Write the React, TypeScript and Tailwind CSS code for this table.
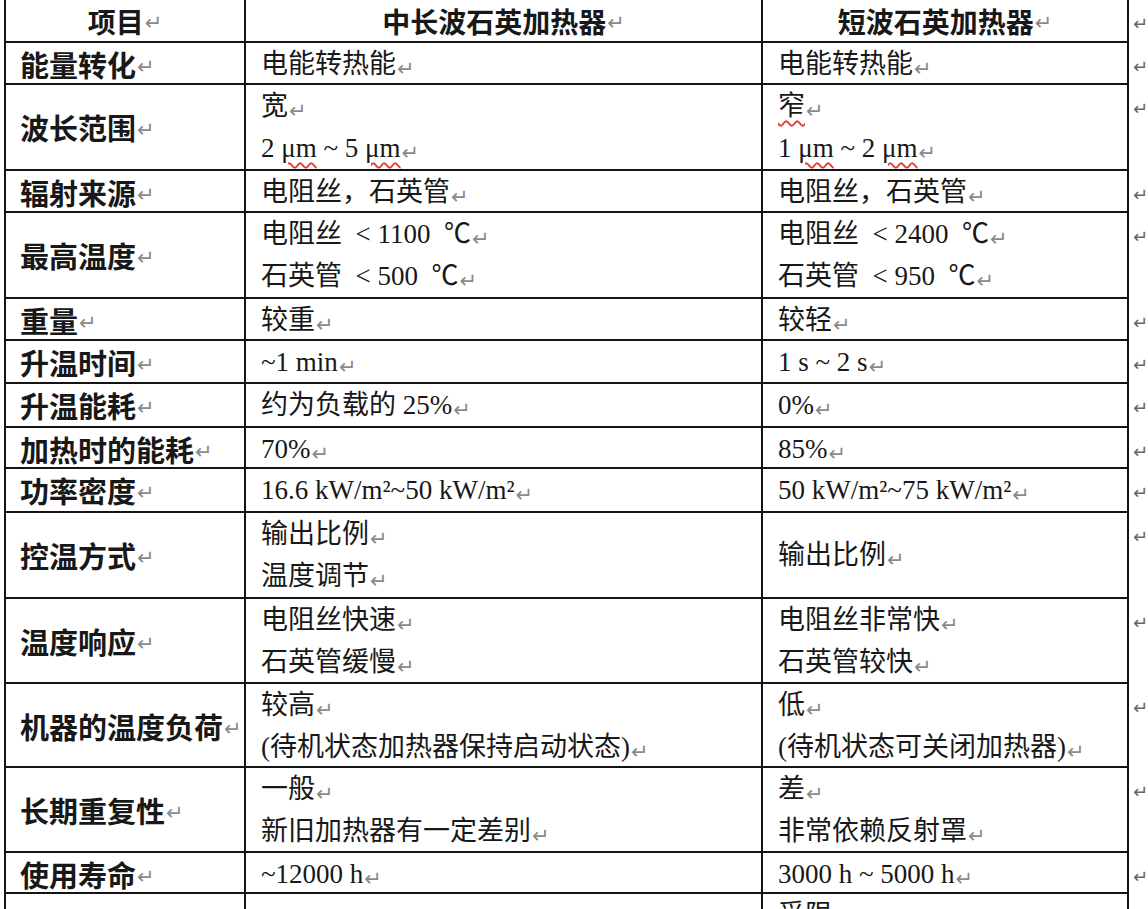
import React from "react";

// Word-style paragraph mark
const Mark = () => (
  <span className="ml-[1px] inline-block translate-y-[3px] font-['DejaVu_Sans'] text-[21px] font-normal leading-none text-[#8a8a8a]">
    ↵
  </span>
);

const Squiggle: React.FC<{ children: React.ReactNode }> = ({ children }) => (
  <span className="underline decoration-[#e0403a] decoration-wavy decoration-[1.5px] underline-offset-[5px]">
    {children}
  </span>
);

type Row = {
  h: string;
  label: string;
  a: React.ReactNode[];
  b: React.ReactNode[];
};

const rows: Row[] = [
  { h: "h-[42px]", label: "能量转化", a: ["电能转热能"], b: ["电能转热能"] },
  {
    h: "h-[86px]",
    label: "波长范围",
    a: ["宽", <>2 <Squiggle>μm</Squiggle> ~ 5 <Squiggle>μm</Squiggle></>],
    b: [<Squiggle>窄</Squiggle>, <>1 <Squiggle>μm</Squiggle> ~ 2 <Squiggle>μm</Squiggle></>],
  },
  { h: "h-[42px]", label: "辐射来源", a: ["电阻丝，石英管"], b: ["电阻丝，石英管"] },
  {
    h: "h-[86px]",
    label: "最高温度",
    a: ["电阻丝  < 1100  ℃", "石英管  < 500  ℃"],
    b: ["电阻丝  < 2400  ℃", "石英管  < 950  ℃"],
  },
  { h: "h-[42px]", label: "重量", a: ["较重"], b: ["较轻"] },
  { h: "h-[43px]", label: "升温时间", a: ["~1 min"], b: ["1 s ~ 2 s"] },
  { h: "h-[44px]", label: "升温能耗", a: ["约为负载的 25%"], b: ["0%"] },
  { h: "h-[41px]", label: "加热时的能耗", a: ["70%"], b: ["85%"] },
  {
    h: "h-[44px]",
    label: "功率密度",
    a: ["16.6 kW/m²~50 kW/m²"],
    b: ["50 kW/m²~75 kW/m²"],
  },
  { h: "h-[86px]", label: "控温方式", a: ["输出比例", "温度调节"], b: ["输出比例"] },
  {
    h: "h-[85px]",
    label: "温度响应",
    a: ["电阻丝快速", "石英管缓慢"],
    b: ["电阻丝非常快", "石英管较快"],
  },
  {
    h: "h-[84px]",
    label: "机器的温度负荷",
    a: ["较高", "(待机状态加热器保持启动状态)"],
    b: ["低", "(待机状态可关闭加热器)"],
  },
  {
    h: "h-[85px]",
    label: "长期重复性",
    a: ["一般", "新旧加热器有一定差别"],
    b: ["差", "非常依赖反射罩"],
  },
  { h: "h-[41px]", label: "使用寿命", a: ["~12000 h"], b: ["3000 h ~ 5000 h"] },
  { h: "h-[86px]", label: "", a: [], b: ["受限", ""] },
];

const Cell: React.FC<{ lines: React.ReactNode[] }> = ({ lines }) => (
  <div className="flex flex-col justify-center border-l-2 border-[#141414] pl-[15px]">
    {lines.map((line, i) => (
      <div key={i} className="h-[42px] whitespace-pre leading-[42px]">
        {line}
        {line !== "" && <Mark />}
      </div>
    ))}
  </div>
);

const EdgeMark = () => (
  <span className="ml-[4px] mt-[15px] font-['DejaVu_Sans'] text-[18px] leading-none text-[#666]">↵</span>
);

export default function App() {
  return (
    <div className="h-[909px] w-[1148px] overflow-hidden bg-white font-['Liberation_Serif','Noto_Sans_CJK_SC',serif] text-[27px] text-[#181818]">
      {/* header */}
      <div className="flex items-start">
        <div className="ml-[4px] grid h-[43px] w-[1136px] grid-cols-[238px_517px_1fr] border-x-2 border-b-2 border-[#141414] font-['Noto_Sans_CJK_SC',sans-serif] text-[28px] font-bold">
          <div className="flex items-center justify-center leading-none">
            项目<Mark />
          </div>
          <div className="flex items-center justify-center border-l-2 border-[#141414] leading-none">
            中长波石英加热器<Mark />
          </div>
          <div className="flex items-center justify-center border-l-2 border-[#141414] leading-none">
            短波石英加热器<Mark />
          </div>
        </div>
        <EdgeMark />
      </div>

      {rows.map((r, i) => (
        <div key={i} className="flex items-start">
          <div
            className={`ml-[4px] grid w-[1136px] grid-cols-[238px_517px_1fr] border-x-2 border-b-2 border-[#141414] ${r.h}`}
          >
            <div className="flex items-center pl-[14px] font-['Noto_Sans_CJK_SC',sans-serif] text-[29px] font-bold leading-none">
              {r.label && (
                <>
                  {r.label}
                  <Mark />
                </>
              )}
            </div>
            <Cell lines={r.a} />
            <Cell lines={r.b} />
          </div>
          <EdgeMark />
        </div>
      ))}
    </div>
  );
}
